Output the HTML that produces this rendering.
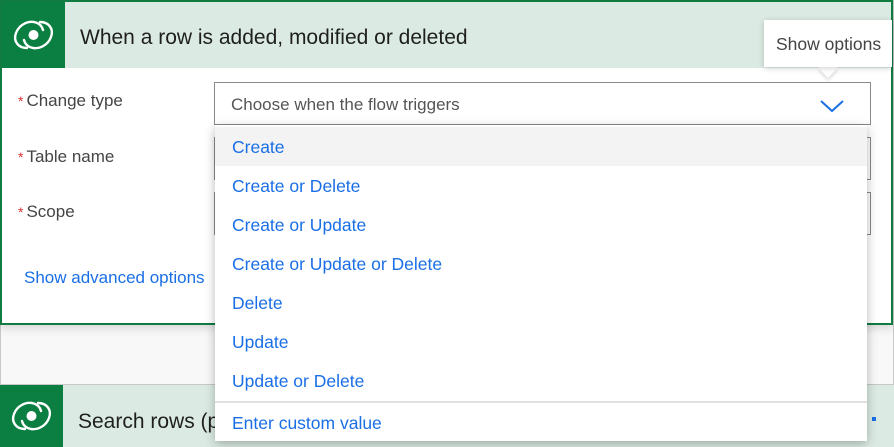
<!DOCTYPE html>
<html><head><style>
*{margin:0;padding:0;box-sizing:border-box}
html,body{width:894px;height:447px;overflow:hidden}
body{background:#f8f8f8;font-family:"Liberation Sans",sans-serif;position:relative}
.frame{position:absolute;left:0;top:0;width:894px;height:447px;border:1px solid #c8c8c8;border-top:none}
.card1{position:absolute;left:0;top:0;width:893px;height:325px;background:#fff;border:2px solid #107c41;box-shadow:0 4px 8px rgba(0,0,0,.12)}
.hdr{position:absolute;left:0;top:0;width:100%;height:66px;background:#dbebe3}
.ico{position:absolute;left:0;top:0;width:63px;height:66px;background:#0b7f42}
.title{position:absolute;left:78px;top:24px;font-size:21px;color:#1f1f1f}
.lbl{position:absolute;left:16px;font-size:17px;color:#444}
.lbl b{color:#d13438;font-weight:normal;font-size:14px;margin-right:3px}
.inp{position:absolute;left:212px;width:657px;height:43px;border:1px solid #8a8a8a;background:#fff}
.card2{position:absolute;left:0;top:384px;width:894px;height:63px;background:#dbebe3;border-top:1px solid #c8c8c8}
.dd{position:absolute;left:215px;top:125px;width:652px;height:316px;background:#fff;box-shadow:0 3px 10px rgba(0,0,0,.28)}
.it{height:39px;line-height:41px;padding-left:17px;font-size:17.5px;color:#1a6fe6}
.tip{position:absolute;left:764px;top:20px;width:128px;height:47px;background:#fff;box-shadow:0 1px 6px rgba(0,0,0,.2);font-size:17.5px;color:#444;line-height:48px;padding-left:12px}
.arr{position:absolute;left:821px;top:61px;width:14px;height:14px;background:#fff;transform:rotate(45deg);box-shadow:2px 2px 3px rgba(0,0,0,.12)}
</style></head><body>
<div class="frame"></div>
<div class="card1">
 <div class="hdr"></div>
 <div class="ico"><svg width="63" height="66" viewBox="0 0 63 66"><g fill="none" stroke="#fff" stroke-width="2.4" stroke-linecap="round"><path d="M25 46c-9 0-14-7-11-15 3-8 11-12 18-11 5 1 8 4 9 8"/><path d="M38 20c9 0 14 7 11 15-3 8-11 12-18 11-5-1-8-4-9-8"/></g><circle cx="31.5" cy="33" r="5" fill="#fff"/></svg></div>
 <div class="title">When a row is added, modified or deleted</div>
 <div class="lbl" style="top:89px"><b>*</b>Change type</div>
 <div class="lbl" style="top:145px"><b>*</b>Table name</div>
 <div class="lbl" style="top:200px"><b>*</b>Scope</div>
 <div class="inp" style="top:80px"><span style="position:absolute;left:16px;top:12px;font-size:17px;color:#555">Choose when the flow triggers</span>
 <svg style="position:absolute;left:604px;top:16px" width="26" height="14"><path d="M2 2l11 10 11-10" fill="none" stroke="#1a6fe6" stroke-width="2"/></svg></div>
 <div class="inp" style="top:135px"></div>
 <div class="inp" style="top:190px"></div>
 <div style="position:absolute;left:22px;top:266px;font-size:17px;color:#1a6fe6">Show advanced options</div>
</div>
<div class="card2">
 <div class="ico" style="height:62px"><svg width="63" height="62" viewBox="0 2 63 62"><g fill="none" stroke="#fff" stroke-width="2.4" stroke-linecap="round"><path d="M25 46c-9 0-14-7-11-15 3-8 11-12 18-11 5 1 8 4 9 8"/><path d="M38 20c9 0 14 7 11 15-3 8-11 12-18 11-5-1-8-4-9-8"/></g><circle cx="31.5" cy="33" r="5" fill="#fff"/></svg></div>
 <div class="title" style="top:25px">Search rows (p</div>
 <div style="position:absolute;left:872px;top:32px;width:4px;height:4px;background:#1a6fe6"></div>
</div>
<div class="dd">
 <div class="it" style="background:#f3f3f3;margin-top:2px">Create</div>
 <div class="it">Create or Delete</div>
 <div class="it">Create or Update</div>
 <div class="it">Create or Update or Delete</div>
 <div class="it">Delete</div>
 <div class="it">Update</div>
 <div class="it">Update or Delete</div>
 <div style="border-top:2px solid #e1e1e1;margin-top:1px"></div>
 <div class="it" style="height:38px;line-height:40px">Enter custom value</div>
</div>
<div class="arr"></div>
<div class="tip">Show options</div>
</body></html>
